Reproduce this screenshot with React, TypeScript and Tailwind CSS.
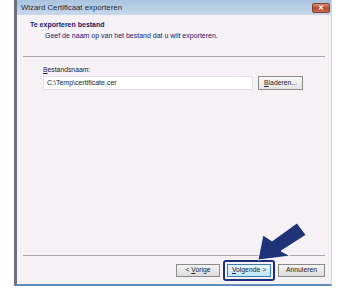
export default function App() {
  return (
    <div className="relative w-[347px] h-[290px] bg-white overflow-hidden" style={{ fontFamily: '"Liberation Sans", Arial, sans-serif' }}>
      {/* Window */}
      <div className="ml-[14px] w-[318px] h-[286px] flex flex-col border-l-[3px] border-l-[#6d7280] border-r border-r-[#c8d6e8] border-b-2 border-b-[#5b8fb8] bg-[#f6f1f5]">
        {/* Title bar */}
        <div className="h-[15px] flex items-center justify-between pl-[4px] pr-[1px] bg-gradient-to-b from-[#a9c3df] to-[#c7d8ea]">
          <span className="text-[7.8px] text-[#1e2a3a]">Wizard Certificaat exporteren</span>
          <div className="w-[18px] h-[10px] rounded-[2px] border border-[#7a4030] bg-gradient-to-b from-[#d9907a] via-[#b84a30] to-[#c86a50] flex items-center justify-center">
            <span className="text-[7px] leading-none text-white font-bold">✕</span>
          </div>
        </div>

        {/* Header */}
        <div className="pl-[13px] pt-[5px] leading-[10px]">
          <div className="text-[7px] font-bold text-[#10206a]">Te exporteren bestand</div>
          <div className="pl-[15px] pt-[1px] text-[7px] text-[#10206a]">Geef de naam op van het bestand dat u wilt exporteren.</div>
        </div>
        <div className="mx-[6px] mt-[15px] h-px bg-[#a8a8b0]" />

        {/* Body */}
        <div className="pl-[26px] pt-[8px] flex-1">
          <div className="text-[6.8px] text-[#1a1a2a]"><span className="underline">B</span>estandsnaam:</div>
          <div className="flex items-center gap-[5px] mt-[1px]">
            <div className="w-[210px] h-[14px] bg-white border border-[#e0e0e6] flex items-center pl-[3px] text-[7px] text-[#222]">
              C:\Temp\certificate.cer
            </div>
            <div className="w-[45px] h-[14px] border border-[#8a8a8a] bg-gradient-to-b from-[#fafafa] to-[#e4e4e4] flex items-center justify-center text-[6.8px] text-[#222]">
              <span><span className="underline">B</span>laderen...</span>
            </div>
          </div>
        </div>

        <div className="mx-[6px] h-px bg-[#a8a8b0]" />

        {/* Footer buttons */}
        <div className="flex items-center justify-end gap-[4px] pr-[6px] h-[28px]">
          <div className="w-[44px] h-[13px] border border-[#8a8a8a] bg-gradient-to-b from-[#f4f4f4] to-[#dcdcdc] flex items-center justify-center text-[6.8px] text-[#222]">
            <span>&lt; <span className="underline">V</span>orige</span>
          </div>
          <div className="rounded-[3px] border-2 border-[#1d3178] p-[2px] -mx-[1px]">
            <div className="w-[44px] h-[13px] border border-[#3c7fb1] bg-gradient-to-b from-[#eaf6fd] to-[#bee6fd] flex items-center justify-center text-[6.8px] text-[#222]">
              <span><span className="underline">V</span>olgende &gt;</span>
            </div>
          </div>
          <div className="w-[47px] h-[13px] border border-[#8a8a8a] bg-gradient-to-b from-[#f4f4f4] to-[#dcdcdc] flex items-center justify-center text-[6.8px] text-[#222]">
            Annuleren
          </div>
        </div>
      </div>

      {/* Pointer arrow overlay */}
      <svg className="absolute left-0 top-0" width="347" height="290" viewBox="0 0 347 290">
        <polygon
          points="258,260 263,235 272,241 297,223 306,235 281,251 290,256"
          fill="#1f3478"
          stroke="#ffffff"
          strokeWidth="0.8"
          strokeLinejoin="round"
        />
      </svg>
    </div>
  );
}
